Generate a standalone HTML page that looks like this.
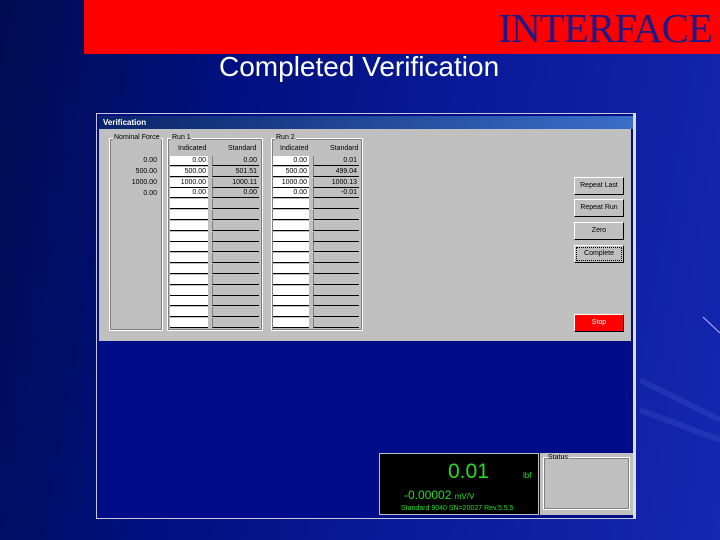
<!DOCTYPE html>
<html><head><style>
*{margin:0;padding:0;box-sizing:border-box}
body{width:720px;height:540px;overflow:hidden;position:relative;font-family:"Liberation Sans",sans-serif;
background:linear-gradient(100deg,#000c50 0%,#001080 30%,#0a1c9c 65%,#1428b0 100%)}
.abs{position:absolute}
.banner{left:84px;top:0;width:636px;height:54px;background:#ff0000}
.title{right:8px;top:4px;font-family:"Liberation Serif",serif;font-size:41px;color:#1c1a88;letter-spacing:-1px}
.sub{left:219px;top:51px;font-size:28px;color:#fff}
.win{left:96px;top:113px;width:540px;height:406px;background:#000c88;border:1px solid #c8c8d8;border-right:3px solid #dde}
.tb{left:2px;top:2px;width:534px;height:13px;background:linear-gradient(90deg,#0a246a,#3a6ec8);color:#fff;font-size:8px;font-weight:bold;padding-left:4px;line-height:13px}
.dlg{left:2px;top:15px;width:532px;height:212px;background:#c0c0c0}
.gb{border:1px solid #fff;outline:1px solid #808080;outline-offset:-2px}
.lbl{font-size:7px;color:#000;background:#c0c0c0;padding:0 1px}
.cell{position:absolute;height:10px;font-size:7px;text-align:right;padding-right:2px;line-height:10px;color:#000}
.w{background:#fff;border-bottom:1px solid #000}
.g{background:#c0c0c0;border-bottom:1px solid #000;border-left:1px solid #808080}
.btn{position:absolute;left:475px;width:50px;height:18px;background:#c0c0c0;border:1px solid #fff;border-right-color:#000;border-bottom-color:#000;font-size:7px;text-align:center;line-height:16px}
</style></head><body>
<svg class="abs" style="left:0;top:0" width="720" height="540"><g stroke="#3a50c8" stroke-width="6" opacity=".35"><line x1="640" y1="410" x2="720" y2="440"/><line x1="640" y1="380" x2="720" y2="420"/></g><line x1="703" y1="317" x2="720" y2="333" stroke="#c8b0ff" stroke-width="1"/></svg>
<div class="abs banner"><div class="abs title">INTERFACE</div></div>
<div class="abs sub">Completed Verification</div>
<div class="abs win">
 <div class="abs tb">Verification</div>
 <div class="abs dlg">
  <div class="abs gb" style="left:10px;top:9px;width:54px;height:193px"></div>
  <div class="abs lbl" style="left:14px;top:5px">Nominal Force</div>
  <div class="abs gb" style="left:68px;top:9px;width:96px;height:193px"></div>
  <div class="abs lbl" style="left:72px;top:5px">Run 1</div>
  <div class="abs gb" style="left:172px;top:9px;width:92px;height:193px"></div>
  <div class="abs lbl" style="left:176px;top:5px">Run 2</div>
  <div class="abs lbl" style="left:78px;top:16px">Indicated</div>
  <div class="abs lbl" style="left:128px;top:16px">Standard</div>
  <div class="abs lbl" style="left:180px;top:16px">Indicated</div>
  <div class="abs lbl" style="left:230px;top:16px">Standard</div>
  <div class="cell" style="left:10px;top:27px;width:50px">0.00</div>
  <div class="cell" style="left:10px;top:38px;width:50px">500.00</div>
  <div class="cell" style="left:10px;top:49px;width:50px">1000.00</div>
  <div class="cell" style="left:10px;top:60px;width:50px">0.00</div>
  <div id="rows"></div>
  <div class="btn" style="top:48px">Repeat Last</div>
  <div class="btn" style="top:70px">Repeat Run</div>
  <div class="btn" style="top:93px">Zero</div>
  <div class="btn" style="top:116px;outline:1px dotted #000;outline-offset:-3px">Complete</div>
  <div class="btn" style="top:185px;background:#ff0000;color:#fff">Stop</div>
 </div>
 <div class="abs" style="left:282px;top:339px;width:160px;height:62px;background:#000;border:1px solid #c0c0c0;color:#22dd22">
  <div class="abs" style="left:68px;top:6px;font-size:21px">0.01</div>
  <div class="abs" style="left:143px;top:17px;font-size:8px">lbf</div>
  <div class="abs" style="left:24px;top:34px;font-size:12px">-0.00002 <span style="font-size:8px">mV/V</span></div>
  <div class="abs" style="left:21px;top:51px;font-size:7px;white-space:nowrap">Standard 9040 SN=20027 Rev.5.5.5</div>
 </div>
 <div class="abs" style="left:443px;top:339px;width:93px;height:62px;background:#c0c0c0">
  <div class="abs" style="left:3px;top:4px;width:87px;height:53px;border:1px solid #fff;outline:1px solid #808080;outline-offset:-2px"></div>
  <div class="abs lbl" style="left:7px;top:1px">Status</div>
 </div>
</div>
<script>
var r=document.getElementById('rows'),h='';
var d=[["0.00","0.00","0.00","0.01"],["500.00","501.51","500.00","499.04"],["1000.00","1000.11","1000.00","1000.13"],["0.00","0.00","0.00","-0.01"]];
for(var i=0;i<16;i++){var t=27+i*10.8,v=d[i]||["","","",""];
h+='<div class="cell w" style="left:71px;top:'+t+'px;width:38px">'+v[0]+'</div>';
h+='<div class="cell g" style="left:113px;top:'+t+'px;width:47px">'+v[1]+'</div>';
h+='<div class="cell w" style="left:174px;top:'+t+'px;width:36px">'+v[2]+'</div>';
h+='<div class="cell g" style="left:214px;top:'+t+'px;width:46px">'+v[3]+'</div>';}
r.innerHTML=h;
</script>
</body></html>
